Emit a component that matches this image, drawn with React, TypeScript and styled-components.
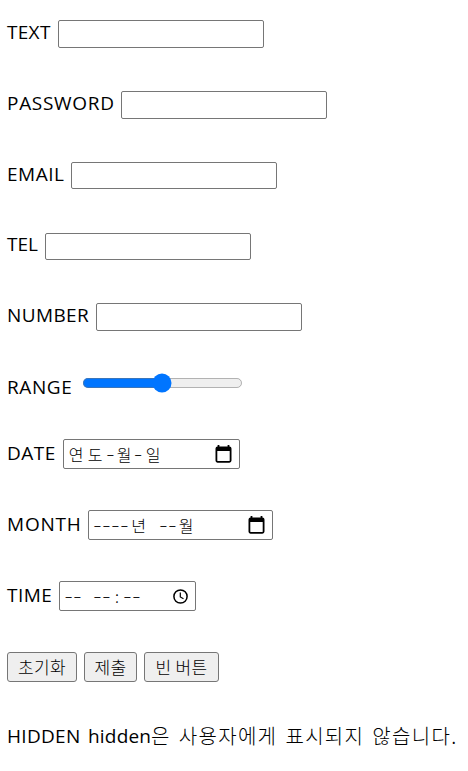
import React from "react";
import styled, { createGlobalStyle } from "styled-components";

const GlobalStyle = createGlobalStyle`
  html, body { margin: 0; background: #fff; }
  body { color: #000; font-family: "Open Sans", "Noto Sans CJK KR", sans-serif; }
`;

const Form = styled.form`
  display: flex;
  flex-direction: column;
  width: 468px;
  height: 771px;
  box-sizing: border-box;
  padding: 20px 0 0 7px;
  overflow: hidden;
`;

const Row = styled.div<{ $h: number; $gap: number }>`
  display: flex;
  flex: none;
  align-items: flex-start;
  height: ${(p) => p.$h}px;
  margin-bottom: ${(p) => p.$gap}px;
`;

const Label = styled.label<{ $w: number; $base?: number; $track?: number }>`
  flex: none;
  width: ${(p) => p.$w}px;
  margin-top: ${(p) => (p.$base ?? 19) - 19}px;
  font-size: 19px;
  line-height: 24px;
  letter-spacing: ${(p) => p.$track ?? 0}px;
  white-space: nowrap;
`;

const TextInput = styled.input`
  box-sizing: border-box;
  width: 206px;
  height: 100%;
  margin: 0;
  padding: 1px 2px;
  border: 1px solid #767676;
  border-radius: 2px;
  background: #fff;
  font: 16px "Noto Sans CJK KR", sans-serif;
  outline: none;
  appearance: textfield;
`;

const RangeInput = styled.input`
  zoom: 1.25;
  width: 129px;
  height: 16px;
  margin: 0;
  accent-color: #0075ff;
`;

const Picker = styled.div<{ $w: number }>`
  display: flex;
  align-items: center;
  box-sizing: border-box;
  width: ${(p) => p.$w}px;
  height: 30px;
  padding: 0 7px 0 4px;
  border: 1px solid #767676;
  border-radius: 2px;
  font: 300 16px/28px "Noto Sans CJK KR", sans-serif;
  svg { flex: none; margin-left: auto; }
`;

const Cell = styled.span<{ $w: number }>`
  flex: none;
  width: ${(p) => p.$w}px;
  text-align: center;
  white-space: pre;
`;

const Dash = styled(Cell)`
  font-family: "Liberation Sans", sans-serif;
  font-size: 15px;
  transform: scale(1.65, 0.75);
`;

const Button = styled.button<{ $w: number }>`
  box-sizing: border-box;
  width: ${(p) => p.$w}px;
  height: 30px;
  margin: 0 7px 0 0;
  padding: 0;
  border: 1px solid #767676;
  border-radius: 3px;
  background: #efefef;
  color: #000;
  font: 300 17px/26px "Noto Sans CJK KR", sans-serif;
  letter-spacing: 0.3px;
  white-space: nowrap;
`;

const Note = styled.p`
  display: flex;
  margin: 0;
  font-size: 19px;
  line-height: 26px;
  white-space: pre;
`;

const Latin = styled.span<{ $w: number; $track: number }>`
  width: ${(p) => p.$w}px;
  letter-spacing: ${(p) => p.$track}px;
`;

const Korean = styled.span`
  font-family: "Noto Sans CJK KR", sans-serif;
  font-weight: 300;
  font-size: 20px;
  letter-spacing: 1.3px;
  word-spacing: 2.4px;
`;

const CalendarIcon = () => (
  <svg width="17" height="18" viewBox="0 0 17 18">
    <path d="M3.5 0v4M13.5 0v4" stroke="#000" strokeWidth="1.8" />
    <rect x="1.4" y="2.4" width="14.2" height="14.4" rx="1.2" fill="none" stroke="#000" strokeWidth="1.8" />
    <path d="M1 2h15v4H1z" />
  </svg>
);

const ClockIcon = () => (
  <svg width="16" height="16" viewBox="0 0 16 16" fill="none" stroke="#000">
    <circle cx="8.5" cy="8.5" r="6.6" strokeWidth="1.5" />
    <path d="M8.3 4.5v4.4l3.2 1.9" strokeWidth="1.2" />
  </svg>
);

const dashes = (n: number) =>
  Array.from({ length: n }, (_, i) => <Dash key={i} $w={9}>-</Dash>);

export default function App() {
  return (
    <>
      <GlobalStyle />
      <Form onSubmit={(e) => e.preventDefault()}>
        <Row $h={28} $gap={43}><Label $w={51} $track={0.3}>TEXT</Label><TextInput type="text" /></Row>
        <Row $h={28} $gap={43}><Label $w={114} $track={0.7}>PASSWORD</Label><TextInput type="password" /></Row>
        <Row $h={27} $gap={44}><Label $w={64} $track={0.5}>EMAIL</Label><TextInput type="email" /></Row>
        <Row $h={27} $gap={43}><Label $w={38} $base={18}>TEL</Label><TextInput type="tel" /></Row>
        <Row $h={28} $gap={42}><Label $w={89} $track={0.4}>NUMBER</Label><TextInput type="number" /></Row>
        <Row $h={20} $gap={46}><Label $w={74.5} $base={21} $track={0.6}>RANGE</Label><RangeInput type="range" /></Row>
        <Row $h={30} $gap={41}>
          <Label $w={56} $base={21} $track={0.5}>DATE</Label>
          <Picker $w={177}>
            <Cell $w={16}>연</Cell><Cell $w={22}>도</Cell><Dash $w={9}>-</Dash>
            <Cell $w={18}>월</Cell><Dash $w={10}>-</Dash><Cell $w={20}>일</Cell>
            <CalendarIcon />
          </Picker>
        </Row>
        <Row $h={30} $gap={41}>
          <Label $w={81} $base={21} $track={0.8}>MONTH</Label>
          <Picker $w={185}>
            {dashes(4)}<Cell $w={19}>년</Cell><Cell $w={11}> </Cell>
            {dashes(2)}<Cell $w={18}>월</Cell>
            <CalendarIcon />
          </Picker>
        </Row>
        <Row $h={30} $gap={41}>
          <Label $w={52} $base={21} $track={0.5}>TIME</Label>
          <Picker $w={137}>
            {dashes(2)}<Cell $w={11}> </Cell>{dashes(2)}<Cell $w={12}>:</Cell>{dashes(2)}
            <ClockIcon />
          </Picker>
        </Row>
        <Row $h={30} $gap={41}>
          <Button type="reset" $w={70}>초기화</Button>
          <Button type="submit" $w={53}>제출</Button>
          <Button type="button" $w={75}>빈 버튼</Button>
        </Row>
        <Note>
          <Latin $w={81} $track={0.3}>HIDDEN </Latin>
          <Latin $w={63} $track={0.2}>hidden</Latin>
          <Korean>은 사용자에게 표시되지 않습니다.</Korean>
        </Note>
      </Form>
    </>
  );
}
